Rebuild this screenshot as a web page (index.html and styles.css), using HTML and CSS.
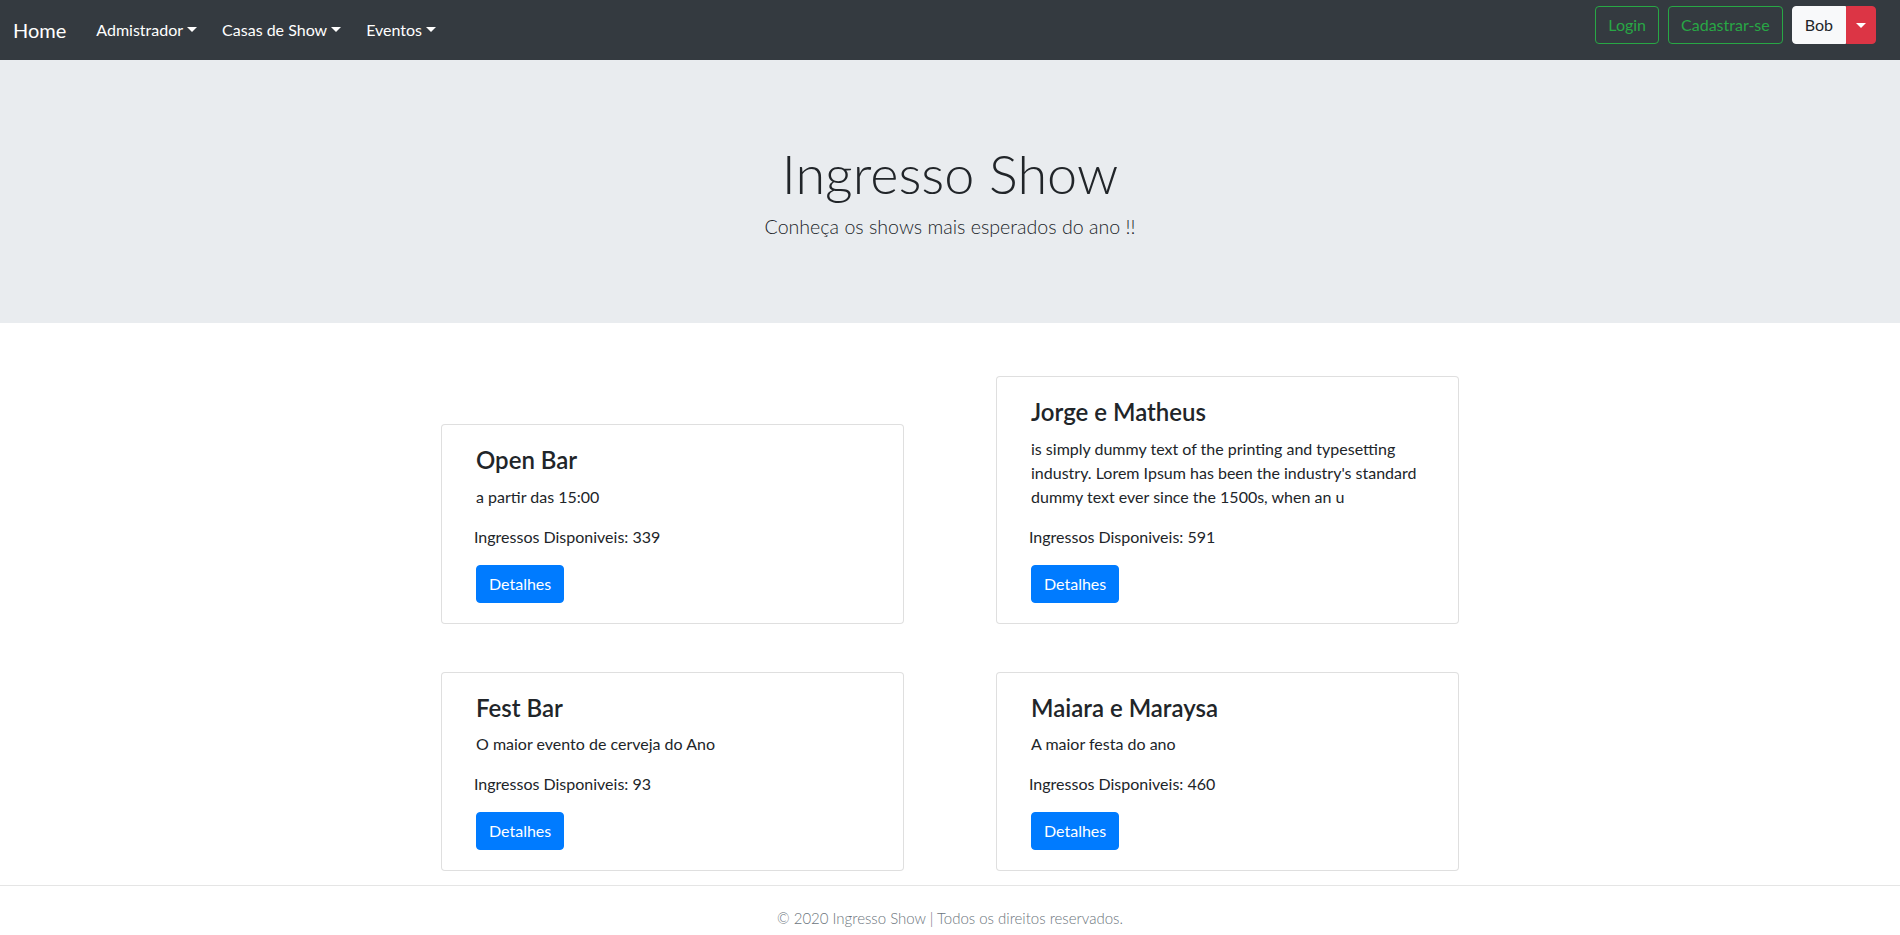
FILE: index.html
```html
<!DOCTYPE html>
<html lang="pt-br">
<head>
<meta charset="utf-8">
<title>Ingresso Show</title>
<link rel="stylesheet" href="styles.css">
</head>
<body>
<nav class="navbar">
  <div class="nav-left">
    <a class="brand" href="#">Home</a>
    <ul class="nav-links">
      <li><a class="nav-link dropdown" href="#">Admistrador</a></li>
      <li><a class="nav-link dropdown" href="#">Casas de Show</a></li>
      <li><a class="nav-link dropdown" href="#">Eventos</a></li>
    </ul>
  </div>
  <div class="nav-right">
    <a class="btn btn-outline-success" href="#">Login</a>
    <a class="btn btn-outline-success" href="#">Cadastrar-se</a>
    <div class="btn-group">
      <button class="btn btn-light">Bob</button>
      <button class="btn btn-danger toggle-split"><span class="caret"></span></button>
    </div>
  </div>
</nav>

<header class="jumbotron">
  <h1 class="display">Ingresso Show</h1>
  <p class="lead">Conheça os shows mais esperados do ano !!</p>
</header>

<main class="events">
  <div class="card">
    <h4 class="card-title">Open Bar</h4>
    <p class="card-text">a partir das 15:00</p>
    <p class="tickets">Ingressos Disponiveis: 339</p>
    <a class="btn btn-primary" href="#">Detalhes</a>
  </div>
  <div class="card">
    <h4 class="card-title">Jorge e Matheus</h4>
    <p class="card-text">is simply dummy text of the printing and typesetting industry. Lorem Ipsum has been the industry's standard dummy text ever since the 1500s, when an u</p>
    <p class="tickets">Ingressos Disponiveis: 591</p>
    <a class="btn btn-primary" href="#">Detalhes</a>
  </div>
  <div class="card">
    <h4 class="card-title">Fest Bar</h4>
    <p class="card-text">O maior evento de cerveja do Ano</p>
    <p class="tickets">Ingressos Disponiveis: 93</p>
    <a class="btn btn-primary" href="#">Detalhes</a>
  </div>
  <div class="card">
    <h4 class="card-title">Maiara e Maraysa</h4>
    <p class="card-text">A maior festa do ano</p>
    <p class="tickets">Ingressos Disponiveis: 460</p>
    <a class="btn btn-primary" href="#">Detalhes</a>
  </div>
</main>

<footer class="footer">
  <p>© 2020 Ingresso Show | Todos os direitos reservados.</p>
</footer>
</body>
</html>
```
FILE: styles.css
```css
* { box-sizing: border-box; }

body {
  margin: 0;
  font-family: Lato, "Liberation Sans", sans-serif;
  font-size: 16px;
  line-height: 1.5;
  color: #212529;
  background: #fff;
}

a { text-decoration: none; }

/* Navbar */
.navbar {
  height: 60px;
  background: #343a40;
  display: flex;
  align-items: center;
  justify-content: space-between;
  padding: 0 24px 0 13px;
}

.nav-left {
  display: flex;
  align-items: center;
}

.brand {
  color: #fff;
  font-size: 20px;
  line-height: 30px;
  margin-right: 30px;
}

.nav-links {
  list-style: none;
  margin: 0;
  padding: 0;
  display: flex;
  gap: 25px;
}

.nav-link {
  color: #fff;
  font-size: 16px;
  line-height: 24px;
  display: inline-block;
}

.dropdown::after {
  content: "";
  display: inline-block;
  margin-left: 4px;
  vertical-align: 4px;
  border-top: 5px solid #fff;
  border-left: 5px solid transparent;
  border-right: 5px solid transparent;
}

.nav-right {
  display: flex;
  align-items: center;
  gap: 9px;
  margin-bottom: 10px;
}

/* Buttons */
.btn {
  display: inline-block;
  font-family: inherit;
  font-size: 16px;
  line-height: 24px;
  padding: 6px 12px;
  border: 1px solid transparent;
  border-radius: 4px;
  cursor: pointer;
  text-align: center;
}

.btn-outline-success {
  color: #28a745;
  border-color: #28a745;
  background: transparent;
}

.btn-group {
  display: flex;
}

.btn-light {
  background: #f8f9fa;
  border-color: #f8f9fa;
  color: #212529;
  border-radius: 4px 0 0 4px;
}

.btn-danger {
  background: #dc3545;
  border-color: #dc3545;
  color: #fff;
}

.toggle-split {
  width: 30px;
  padding: 6px 0;
  border-radius: 0 4px 4px 0;
  display: flex;
  align-items: center;
  justify-content: center;
}

.caret {
  display: block;
  border-top: 5px solid #fff;
  border-left: 5px solid transparent;
  border-right: 5px solid transparent;
}

.btn-primary {
  background: #007bff;
  border-color: #007bff;
  color: #fff;
}

/* Jumbotron */
.jumbotron {
  background: #e9ecef;
  padding: 82px 16px 81px;
  text-align: center;
}

.display {
  margin: 0;
  font-size: 54px;
  font-weight: 300;
  line-height: 1.2;
  color: #212529;
}

.lead {
  margin: 5px 0 0;
  font-size: 19.6px;
  font-weight: 300;
  line-height: 30px;
  color: #212529;
}

/* Cards */
.events {
  width: 1018px;
  margin: 53px auto 0;
  display: grid;
  grid-template-columns: 463px 463px;
  column-gap: 92px;
  row-gap: 48px;
  align-items: end;
}

.card {
  border: 1px solid rgba(0, 0, 0, 0.125);
  border-radius: 4px;
  padding: 21px 34px 20px;
  background: #fff;
}

.card-title {
  margin: 0 0 10px;
  font-size: 24px;
  font-weight: 600;
  line-height: 1.2;
}

.card-text {
  margin: 0 0 16px;
}

.tickets {
  margin: 0 0 16px -2px;
}

/* Footer */
.footer {
  margin-top: 14px;
  border-top: 1px solid #e5e5e5;
  padding-top: 21px;
  text-align: center;
}

.footer p {
  margin: 0;
  font-size: 15px;
  font-weight: 300;
  color: #6c757d;
}
```
